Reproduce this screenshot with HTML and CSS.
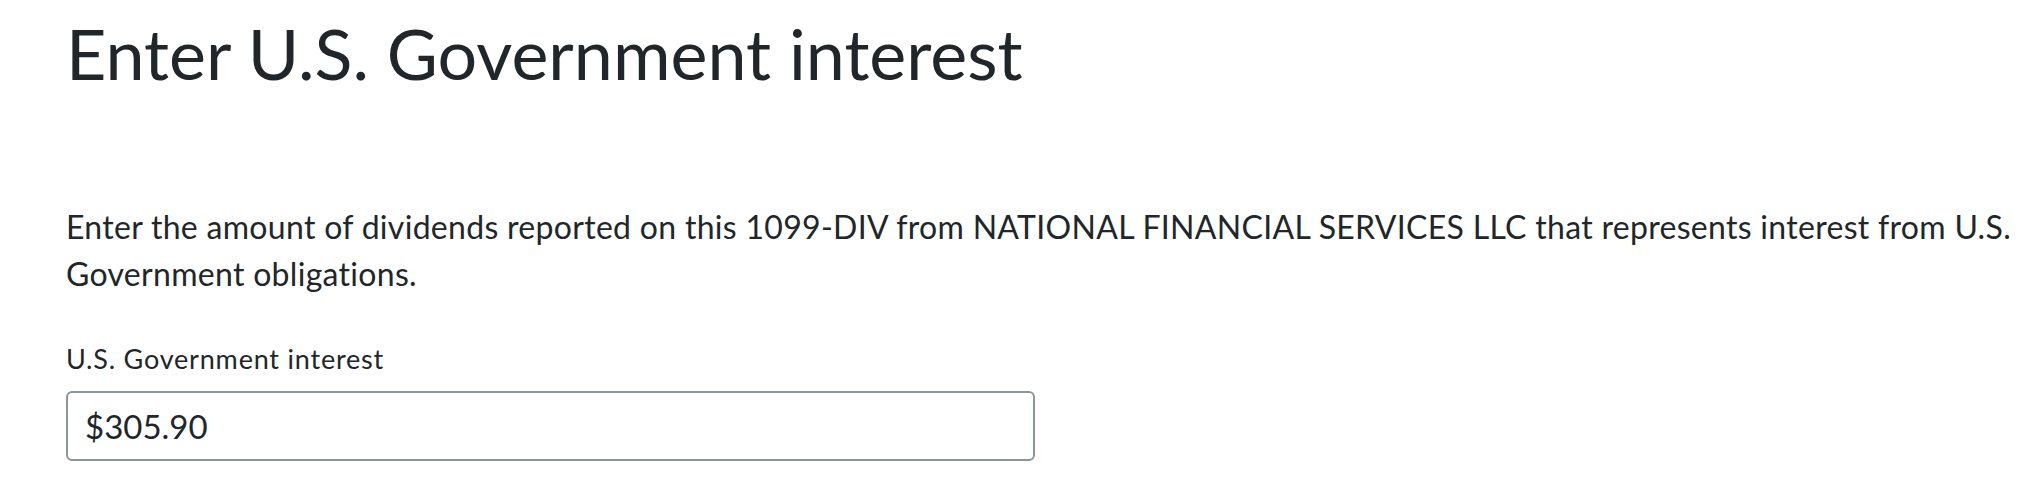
FILE: index.html
```html
<!DOCTYPE html>
<html lang="en">
<head>
<meta charset="utf-8">
<title>Enter U.S. Government interest</title>
<link rel="stylesheet" href="styles.css">
</head>
<body>
<main class="page">
  <h1 class="title">Enter U.S. Government interest</h1>
  <p class="intro">Enter the amount of dividends reported on this 1099-DIV from NATIONAL FINANCIAL SERVICES LLC that represents interest from U.S. Government obligations.</p>
  <div class="field">
    <label class="field-label" for="usgov">U.S. Government interest</label>
    <input class="field-input" id="usgov" type="text" value="$305.90">
  </div>
</main>
</body>
</html>
```
FILE: styles.css
```css
html, body {
  margin: 0;
  padding: 0;
  background: #ffffff;
}
body {
  font-family: "Lato", "Noto Sans", sans-serif;
  color: #21262a;
}
.page {
  padding: 0 8px 0 66px;
}
.title {
  margin: 11px 0 0 0;
  font-size: 70px;
  font-weight: 400;
  line-height: 1.2;
}
.intro {
  margin: 108px 0 0 0;
  font-size: 32px;
  line-height: 47px;
  letter-spacing: 0.3px;
}
.field {
  display: flex;
  flex-direction: column;
  align-items: flex-start;
  margin-top: 44px;
}
.field-label {
  font-size: 27px;
  line-height: 36px;
  letter-spacing: 0.8px;
}
.field-input {
  margin-top: 14px;
  box-sizing: border-box;
  width: 969px;
  height: 70px;
  border: 2px solid #8a959e;
  border-radius: 6px;
  padding: 0 17px;
  font-family: inherit;
  font-size: 33px;
  color: #21262a;
  background: #fff;
  outline: none;
}
```
